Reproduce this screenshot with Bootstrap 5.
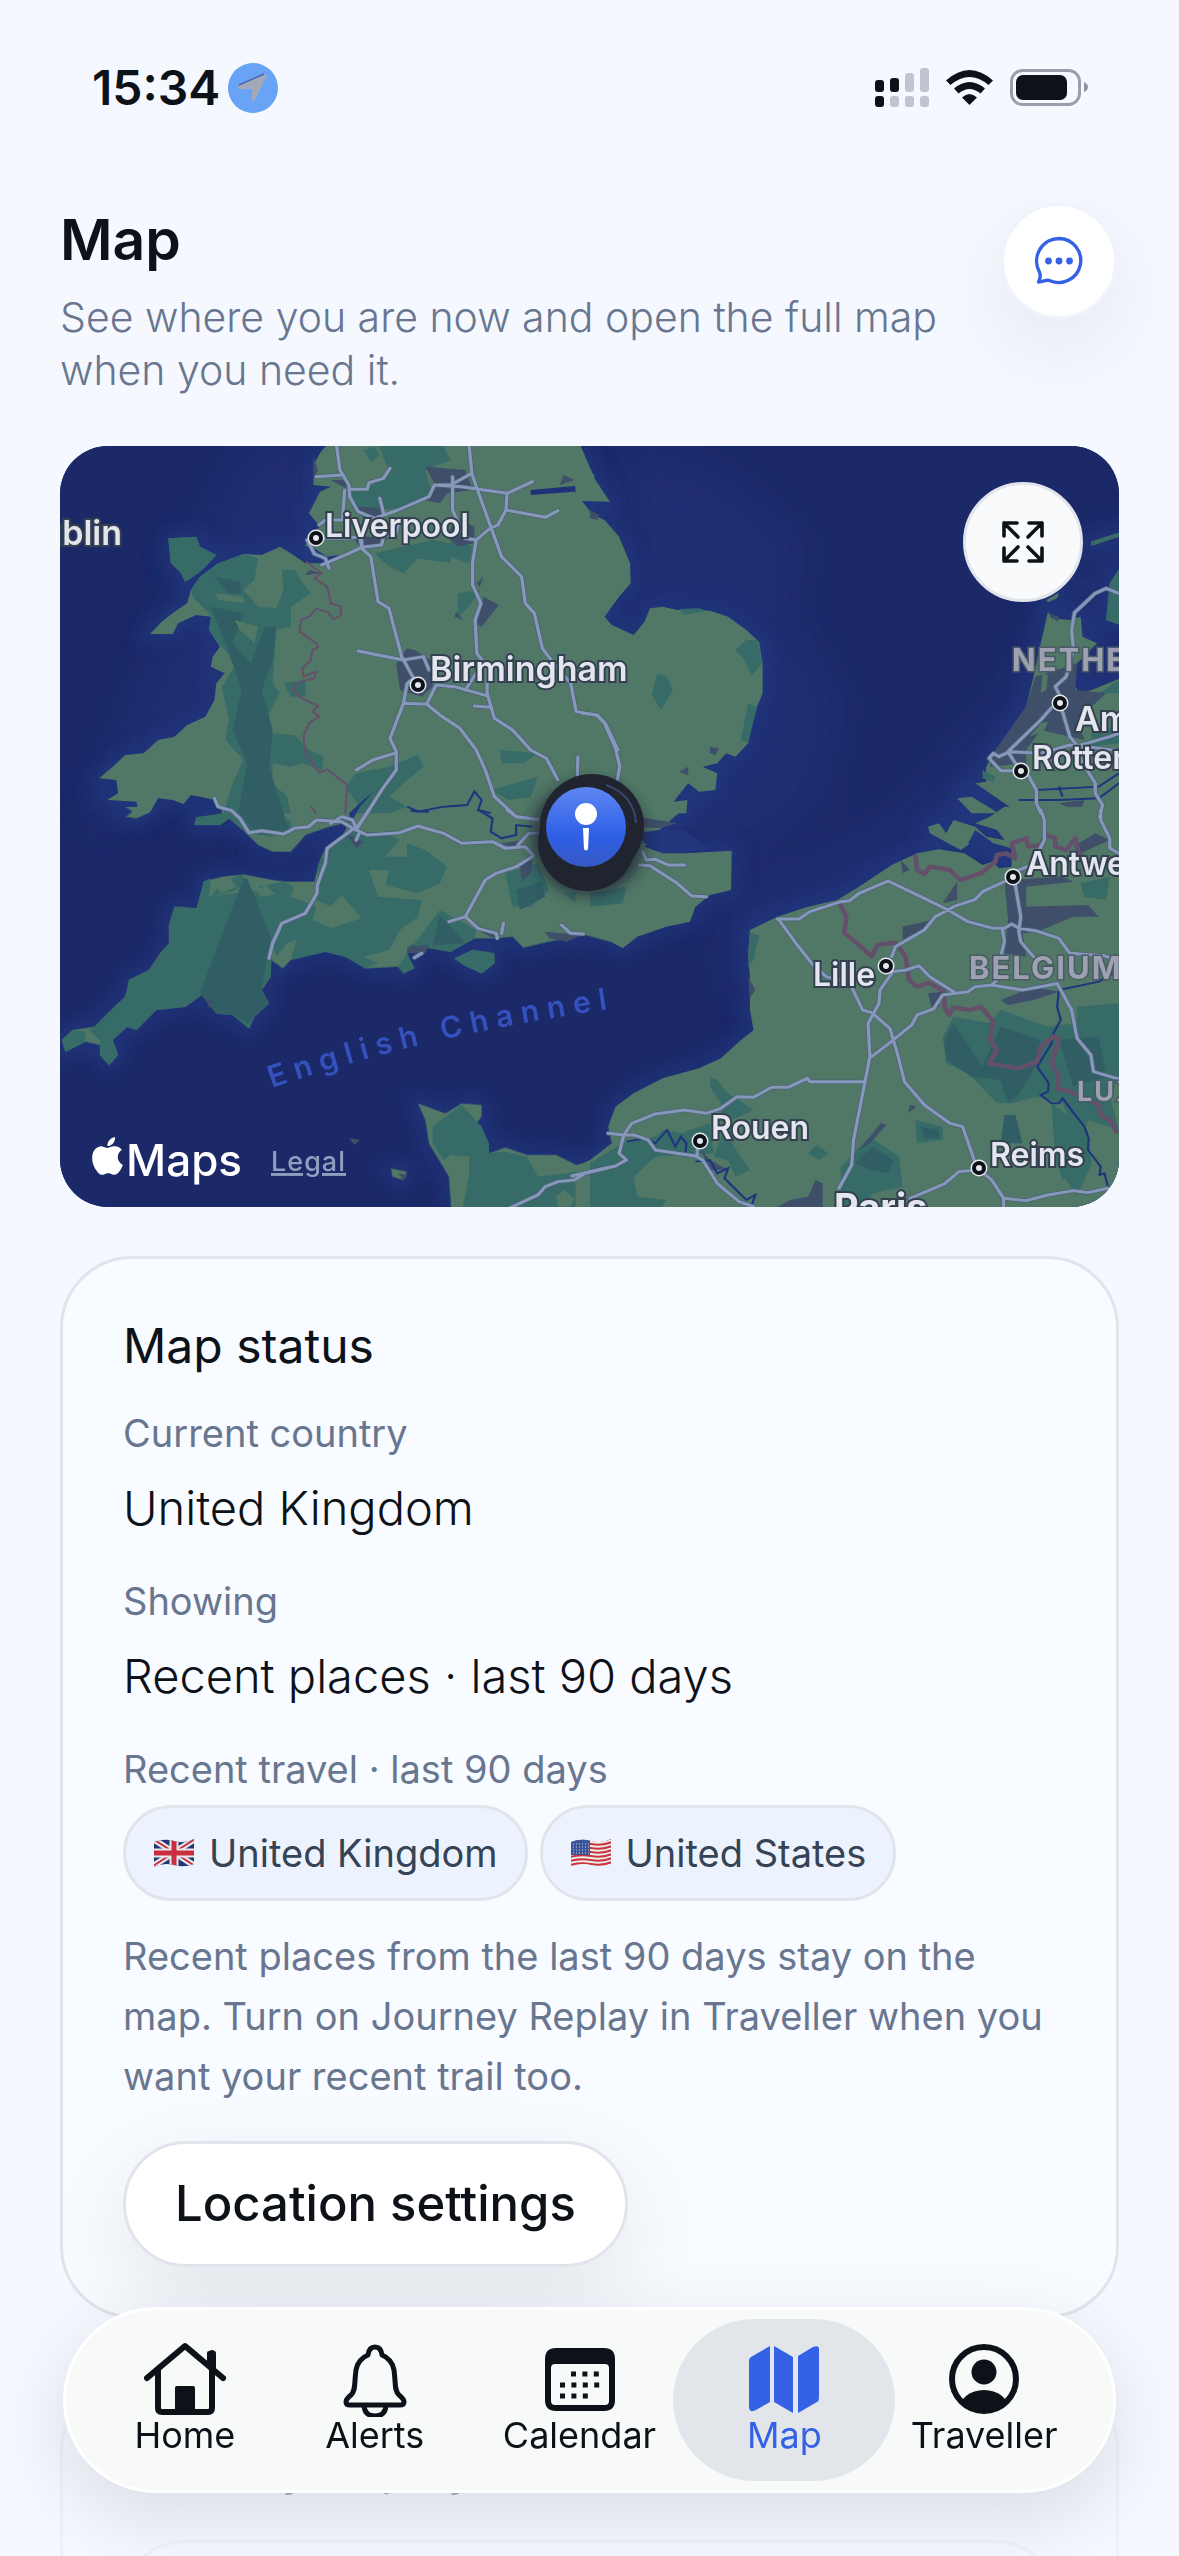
<!DOCTYPE html>
<html lang="en">
<head>
<meta charset="utf-8">
<meta name="viewport" content="width=device-width, initial-scale=1">
<title>Map</title>
<link rel="stylesheet" href="https://cdn.jsdelivr.net/npm/bootstrap@5.3.0/dist/css/bootstrap.min.css">
<script src="https://cdn.jsdelivr.net/npm/bootstrap@5.3.0/dist/js/bootstrap.bundle.min.js"></script>
<style>
:root{--ink:#0d1118;--muted-ink:#68768f;--line:#e1e5eb;--blue:#3461e6}
body{background:#f5f8fe;color:var(--ink);font-family:Inter,"Liberation Sans",sans-serif;font-size:36px;font-weight:400}
.screen{height:100vh;overflow:hidden;padding:0 60px}
.status-bar{height:203px;padding:63px 30px 0 32px}
.clock{font-size:48px;font-weight:600;line-height:50px}
.page-title{font-size:57px;font-weight:600;line-height:74px;margin:0 0 14px}
.page-sub{font-size:41px;font-weight:300;line-height:53px;color:var(--muted-ink);margin:0;max-width:900px}
.round-btn{width:116px;height:116px;padding:0;margin-right:2px;border-radius:50%;border:3px solid #eef3fc;background:#fff;box-shadow:0 30px 90px rgba(15,23,42,.08)}
.map-frame{margin-top:49px;border-radius:48px;overflow:hidden;background:#1b2867}
.map-frame>svg{display:block;width:100%;height:auto}
.map-frame .expand-btn{top:36px;right:36px;width:120px;height:120px;padding:0;border-radius:50%;border:3px solid #e1e5eb;background:#f8fafb}
.panel{border:3px solid var(--line);border-radius:72px;background:#f8fbff;padding:57px 60px 48px;margin-top:49px}
.panel-title{font-size:48px;font-weight:400;line-height:60px;margin:0 0 33px}
.panel dl{margin:0}
.panel dt{font-size:38px;font-weight:400;line-height:48px;color:var(--muted-ink)}
.panel dd{font-size:47px;font-weight:300;line-height:60px;margin:21px 0 39px}
.panel dd.chips{margin:12px 0 25px;display:flex;gap:12px}
.chip{display:flex;align-items:center;gap:14px;height:96px;padding:0 27px;border:3px solid var(--line);border-radius:48px;background:#ecf3fe;color:#364354;font-size:38px;font-weight:400}
.note{font-size:38px;line-height:60px;color:var(--muted-ink);margin:0 0 35px;max-width:925px}
.settings-btn{height:126px;padding:0 49px;border:3px solid var(--line);border-radius:63px;background:#fff;font-size:49px;line-height:60px;font-weight:500;color:var(--ink);box-shadow:0 30px 90px rgba(15,23,42,.09)}
.panel.faded{margin-top:60px;height:400px;opacity:.3}
.faded .inner-box{height:120px;margin-top:42px;border:3px solid var(--line);border-radius:60px}
.tab-bar{position:fixed;left:63px;right:63px;bottom:63px;height:186px;padding:0 24px;border:3px solid #fff;border-radius:93px;background:#f8faf9;box-shadow:0 24px 80px rgba(15,23,42,.12)}
.tab{position:relative;display:flex;flex-direction:column;align-items:center;padding-top:31px;color:var(--ink);text-decoration:none;font-size:36px;line-height:36px;flex:19 1 0;min-width:0}
.tab.wide{flex-grow:22}
.tab.last{flex-grow:21}
.tab span,.tab svg{position:relative}
.tab.active{color:var(--blue)}
.tab.active::before{content:"";position:absolute;inset:9px -16px;border-radius:81px;background:#e2e6eb}
.forest{fill:#366b68}.moor{fill:#305e64}.town{fill:#3f4f69}.land{fill:#517867}
.shore{stroke:#22377f;stroke-width:46;fill:none;filter:url(#soft);opacity:.8}
.shelf{fill:#203178;filter:url(#wide-soft);opacity:.7}
.water{fill:#22367e}.stream{fill:none;stroke:#20347e;stroke-width:6}
.casing{fill:none;stroke:#4a6273;stroke-width:13;stroke-linejoin:round;stroke-linecap:round}
.road{fill:none;stroke:#8797bc;stroke-width:9;stroke-linejoin:round;stroke-linecap:round}
.frontier{fill:none;stroke:#65506b;stroke-width:6;stroke-linejoin:round}
.frontier.bold{stroke-width:13}
.city{font:600 32px Inter,"Liberation Sans",sans-serif;fill:#e3e6ee;stroke:#34404f;stroke-width:4;paint-order:stroke}
.city .big{font-size:34px}
.nation{font:700 31px Inter,"Liberation Sans",sans-serif;fill:#9da1b1;stroke:#4a5a66;stroke-width:3;paint-order:stroke;letter-spacing:2px}
.sea-name{font:600 30px Inter,"Liberation Sans",sans-serif;fill:#3451bd;letter-spacing:8px}
</style>
</head>
<body>
<div class="screen">
  <div class="status-bar d-flex justify-content-between align-items-start">
    <div class="d-flex align-items-center">
      <span class="clock">15:34</span>
      <svg class="ms-2" width="50" height="50" viewBox="0 0 50 50"><circle cx="25" cy="25" r="25" fill="#68a3f5"/><path d="M11 22 36 11q3 0 2 3L27 37q-2 3-3 0V26H12q-4-1-1-4z" fill="#a2a9b8"/><path d="M11 22 36 11" stroke="#4a63b8" stroke-width="1.500"/></svg>
    </div>
    <svg width="216" height="50" viewBox="873 63 216 50" aria-label="Signal, Wi-Fi and battery">
      <g fill="#0d1118"><rect x="875" y="80" width="9" height="12" rx="3"/><rect x="890" y="78" width="9" height="14" rx="3"/><rect x="875" y="96" width="9" height="11" rx="3"/></g>
      <g fill="#bfc6d1"><rect x="905" y="73" width="9" height="19" rx="3"/><rect x="920" y="68" width="9" height="24" rx="3"/><rect x="890" y="96" width="9" height="11" rx="3"/><rect x="905" y="96" width="9" height="11" rx="3"/><rect x="920" y="96" width="9" height="11" rx="3"/></g>
      <g fill="#0d1118"><path d="M969.500 105l-7.500-7.500q7.500-7 15 0z"/><path d="M954 88.500q15.500-13 31 0l-4.500 5q-11-9-22 0z"/><path d="M946 80.500q23.500-21 47 0l-4.500 4.500q-19-16-38 0z"/></g>
      <rect x="1011.500" y="70.500" width="68" height="34" rx="11" fill="none" stroke="#989eac" stroke-width="3"/><rect x="1016" y="75" width="51" height="25" rx="7" fill="#0d1118"/><path d="M1084 82v10q4-2 4-5t-4-5z" fill="#8b93a1"/>
    </svg>
  </div>

  <header class="d-flex justify-content-between align-items-start">
    <div>
      <h1 class="page-title">Map</h1>
      <p class="page-sub">See where you are now and open the full map when you need it.</p>
    </div>
    <button class="round-btn btn flex-shrink-0" type="button" aria-label="Messages">
      <svg width="52" height="52" viewBox="0 0 52 52" fill="none" stroke="#3461e6" stroke-width="3.400" stroke-linejoin="round"><path d="M26 3.500a22 22 0 1 1-9 42.200c-4-1.700-6 1.300-11.500 1.300 2-4 2.500-7 .800-10.300A22.500 22.500 0 0 1 26 3.500z"/><g fill="#3461e6" stroke="none"><circle cx="15.500" cy="26" r="3.400"/><circle cx="26" cy="26" r="3.400"/><circle cx="36.500" cy="26" r="3.400"/></g></svg>
    </button>
  </header>

  <section class="map-frame position-relative" aria-label="Map of southern England and northern France">
    <svg viewBox="60 446 1059 761">
      <defs>
        <filter id="soft" x="-20%" y="-20%" width="140%" height="140%"><feGaussianBlur stdDeviation="9"/></filter>
        <filter id="wide-soft" x="-40%" y="-40%" width="180%" height="180%"><feGaussianBlur stdDeviation="22"/></filter>
        <filter id="halo" x="-50%" y="-50%" width="200%" height="200%"><feGaussianBlur stdDeviation="7"/></filter>
        <linearGradient id="pinfill" x1="0" y1="0" x2="0" y2="1"><stop offset="0" stop-color="#5f86f2"/><stop offset=".6" stop-color="#2f60e6"/><stop offset="1" stop-color="#3658c4"/></linearGradient>
        <g id="ring"><circle r="8.500" fill="#e6e8ee"/><circle r="7" fill="#0d1118"/><circle r="3" fill="#e6e8ee"/></g>
        <path id="nw" d="M800 30 770 70 755 100 752 165 800 170 770 185 740 250 770 290 735 325 730 350 750 375 775 395 730 400 690 370 660 350 610 375 560 372 530 385 490 400 440 440 415 480 405 520 370 545 335 575 303 612 365 612 380 580 430 555 470 560 465 600 495 650 475 680 470 710 508 730 485 760 480 810 455 860 405 885 370 920 325 930 285 970 235 975 200 1010 163 1045 210 1050 215 1090 185 1110 265 1115 268 1130 250 1148 302 1148 325 1105 365 1110 395 1122 415 1095 440 1100 480 1110 505 1140 500 1150 1525 1150 1525 262 1500 225 1470 185 1350 195 1350 180 1470 168 1525 208 1525 135 1520 130 1480 30z M353 325 430 320 440 350 485 375 455 410 435 430 400 455 385 425 360 400z"/>
        <path id="ne" d="M-40 60 0 125 55 215 -40 212z M-40 235 0 250 40 270 80 320 110 400 112 460 80 500 40 560 60 585 120 615 150 575 165 535 200 530 240 540 330 542 380 560 430 600 465 635 475 700 475 790 440 880 435 940 400 980 375 970 350 1000 310 1010 350 1030 345 1080 300 1085 270 1060 230 1115 268 1110 265 1150 -40 1150z"/>
        <path id="low" d="M1260 545 1270 565 1320 570 1350 560 1355 620 1395 640 1340 700 1330 760 1345 790 1380 780 1470 740 1500 1150 1180 1150 1060 1060 1090 1055 1090 1010 1110 970 1155 900 1200 830 1220 740 1240 640z M1010 1105 1050 1100 1110 1140 1120 1150 1050 1150z M1430 460 1460 410 1460 585 1420 570z M1255 510 1290 488 1285 505 1260 517z M1378 335 1455 308 1455 320 1380 347z"/>
        <path id="sw" d="M235 -10 305 -10 300 8 265 25 235 20 255 5z M430 22 425 45 495 45 520 25 560 62 600 105 640 125 690 125 715 95 730 75 790 52 850 35 830 85 780 125 765 165 755 215 680 215 640 210 560 193 500 200 450 215 445 250 465 260 430 295 370 290 355 345 355 400 330 430 300 480 245 510 235 560 205 590 150 650 90 660 60 690 70 725 125 695 165 705 165 735 190 765 215 735 200 690 240 650 265 660 320 600 400 590 445 555 485 610 530 615 575 655 590 620 630 580 610 540 635 500 635 450 668 475 690 450 785 425 840 440 895 475 985 470 1000 490 1030 475 1010 430 1020 405 1130 425 1195 385 1250 385 1300 380 1330 413 1400 395 1500 375 1568 395 1620 400 1620-10 500-10 500 15 480 18z M1140 445 1190 420 1250 430 1250 460 1215 490 1165 465z M1040 880 1115 910 1160 880 1215 885 1215 920 1200 940 1235 1000 1235 1030 1280 1012 1340 1035 1420 1035 1475 1065 1568 1040 1568 1260 1135 1260 1125 1100 1070 1000 1060 930z M965 1075 1010 1085 1000 1110 970 1100z"/>
        <path id="se" d="M-40-10 265-10 190 60 150 110 200 130 260 130 390 122 388 240 330 255 290 290 275 335 210 350 130 380 90 415 40 385 0 375-40 370z M-40 1070 0 1050 60 1000 50 950 70 890 120 850 200 805 300 775 360 745 410 695 450 660 440 600 440 500 435 430 440 360 515 320 600 290 680 270 740 230 830 165 900 130 960 118 1030 130 1080 165 1120 150 1160 120 1110 120 1060 90 1020 120 935 70 930 50 960 40 980 70 1000 30 1060 50 1090 80 1140 90 1120 60 1060 40 1100 20 1140-10 1500-10 1500 1260-40 1260z"/>
        <path id="nw-roads" d="M815 40 825 120 850 165 852 200 875 245 920 265 985 240 1070 200 1085 165 1160 170 1285 190 1355 155M760 140 830 135M850 178 900 178 905 158 945 145 963 115M838 180 832 270 785 270 768 285M885 325 885 355 910 380 930 515 960 535 995 680 1028 745 1010 760 1000 820 963 925 980 965 980 1020 940 1080 870 1200M735 330 755 372 785 385 795 415M775 405 850 370 885 352 940 345 945 320 980 310 985 285M780 325 840 325 880 320 885 350M1180 40 1188 130 1210 200 1240 290 1270 380 1325 440 1335 520 1360 550 1382 655 1420 710 1460 760 1475 845 1530 855 1555 880 1590 960M1135 140 1135 240 1170 325 1200 330 1238 295 1260 285 1282 240 1285 190M1282 240 1390 262 1425 242M1188 130 1130 165 1095 165M1200 330 1190 400 1190 465 1213 520 1197 570 1202 670 1230 710 1230 790 1250 865 1300 900 1350 960 1393 985 1425 1050M875 663 1000 690 1055 680 1070 720M1000 820 1065 823 1100 855 1155 895 1200 960 1225 1020 1250 1100 1310 1160 1370 1170M1065 820 1090 765 1140 770 1228 797M1170 780 1200 730M1195 828 1240 832M870 1020 915 990 975 970M1480 980 1478 1040M480 1105 490 1130 520 1140M935 205 945 250"/>
        <path id="ne-roads" d="M-20 850 20 855 40 880 70 955 82 1010 75 1050M1455 490 1420 475 1390 490 1333 548 1325 600 1330 660 1310 740 1280 770 1294 800M1270 833 1240 870 1150 965 1170 1000 1185 1010M1300 845 1320 920 1350 960 1350 990 1390 1060 1390 1090 1410 1125 1402 1160M1155 965 1240 970 1320 945 1455 962M1350 945 1430 920 1455 910M1155 965 1125 980 1110 970 1098 985 1130 1022 1165 1022M1205 1035 1228 1080 1228 1120 1240 1150"/>
        <path id="sw-roads" d="M525 0 550 25 575 68 610 62 670 72 700 55 740 50 760 30 830 35 860 55 900 75 990 68 1040 48 1110 70 1160 100 1245 95 1280 115 1335 110 1358 137 1310 170 1255 190 1225 210 1170 320 1125 335M1170 320 1205 355 1255 370 1258 385M1315 105 1345 70 1370 70M870 50 790 115 785 160 763 225 762 250 730 310 665 340 640 400 630 445M800 40 830 20 860 30 870 55 905 0M870 90 880 65M1285 0 1310 20 1370 28M1275 340 1270 370M1435 345 1460 370 1495 372M1030 443 1050 430M1290 1195 1370 1155 1390 1130 1425 1115 1470 1110 1500 1090 1568 1072"/>
        <path id="se-roads" d="M145 125 155 150 180 148 215 165 260 165M135 165 165 167 240 220 280 258 320 260M450 1190 410 1175 350 1120 310 1050 290 1038 180 1020 160 990 120 975 90 975 50 970M295 1010 295 1038M-50 1098 0 1085 70 1068 100 1050 80 1030 93 975 115 940 180 912 260 900 320 910 360 895 405 860 450 862 500 832 545 832 598 805 605 815 755 815M685 1135 720 1065 725 990 770 740 765 640 795 580 798 540 830 490M830 440 840 410 920 360 950 320 985 300 1000 290 1060 268 1080 245 1140 215M515 327 575 327 605 305 690 275 715 272 740 250 820 213 920 265 985 300 1040 335 1110 355 1140 355 1160 342 1180 355 1225 362 1290 385 1320 430 1415 437 1455 455M520 330 570 405 610 460 650 500 715 520 750 600 775 608 825 655 848 740 865 815 920 885 990 940 1025 950 1060 1060M775 740 835 690 885 645 900 615 945 597 970 555 1040 545 1060 530 1105 525 1190 540 1280 522M830 485 870 480 905 467 935 500 1000 545M1105 525 1130 500M1170 225 1185 320 1180 365 1185 395 1220 440M1135 360 1140 395 1130 440M1170 185 1215 165 1250 90 1250 30 1240 0M1405 0 1405 30 1430 85 1430 115 1455 130M1285 520 1325 600 1340 685 1378 735 1385 785 1455 807M880 1165 975 1122 1015 1085 1070 1080 1105 1110 1138 1165 1138 1200M1138 1165 1200 1172 1260 1155 1330 1142 1370 1148 1425 1135"/>
      </defs>
      <rect x="60" y="446" width="1059" height="761" fill="#1b2968"/>
      <g class="shelf"><path d="M250 440 330 440 330 560 230 600 240 700 150 800 80 830 140 700 190 560z"/><path d="M620 440 720 470 800 540 790 620 840 700 820 800 740 860 620 860z"/><path d="M1119 520 1119 700 960 860 740 1000 720 900 900 820 1020 680 1060 560z"/></g>
      <g class="shore">
        <use href="#nw" transform="translate(40 430) scale(.3635 .3333)"/>
        <use href="#ne" transform="translate(590 430) scale(.3635 .3333)"/>
        <use href="#low" transform="translate(590 430) scale(.3635 .3333)"/>
        <use href="#sw" transform="translate(40 810) scale(.3635 .3333)"/>
        <use href="#se" transform="translate(590 810) scale(.3635 .3333)"/>
      </g>
      <g transform="translate(40 810) scale(.3635 .3333)"><use href="#sw" class="land"/></g>
      <g transform="translate(40 430) scale(.3635 .3333)">
        <use href="#nw" class="land"/>
        <path class="forest" d="M925 30 1100 30 1130 90 1060 120 1080 200 1000 230 950 240 870 235 850 185 900 180 960 120z M890 60 920 50 935 75 910 95z M353 325 430 320 440 350 485 375 455 410 435 430 400 455 385 425 360 400z M490 400 560 372 600 385 590 450 560 480 600 530 650 535 670 480 665 420 700 420 730 470 745 490 690 530 690 590 650 600 640 760 660 790 620 870 640 910 700 915 740 960 780 980 775 1020 720 1000 690 1010 640 1000 640 1060 680 1100 690 1150 505 1150 530 1060 560 990 510 930 520 870 500 770 540 700 500 650 465 600 470 555 420 500 415 480 440 440z M670 760 730 750 730 800 690 800z M920 370 1080 330 1130 340 1130 400 1040 385 1000 430 960 410z M1150 490 1210 480 1180 530 1150 560z M870 1030 960 1010 1040 975 1055 1010 1000 1060 960 1100 1010 1130 960 1150 860 1150 880 1130 840 1070z M1265 960 1370 970 1330 1000 1270 1000z M1240 1080 1370 1040 1350 1100 1290 1110z M1130 310 1190 350 1180 400 1130 380z"/>
        <path class="moor" d="M480 440 550 455 555 490 520 490z M470 530 560 550 530 640 580 700 620 590 650 590 640 690 610 780 640 900 630 1010 670 1150 545 1150 570 1000 530 900 555 780 510 640z"/>
        <path class="land" d="M480 490 560 500 560 520 490 510z M535 570 600 590 590 640 550 600z M740 1040 800 1020 830 1060 820 1150 770 1150z"/>
        <path class="town" d="M1060 110 1170 120 1190 180 1120 190 1100 220 1060 210 1085 160z M870 230 950 235 940 265 890 265z M1145 260 1195 290 1195 340 1150 350 1120 320z M980 700 1010 655 1030 660 1075 690 1080 770 1050 800 990 780z M740 420 775 430 730 435z M800 150 850 150 840 175z M1440 135 1470 150 1430 165z M1220 500 1262 525 1215 590 1200 580z M1200 460 1220 440 1210 470z M1145 545 1165 570 1140 560z M752 80 765 120 752 150z M860 320 960 320 940 345 880 350z"/>
        <path class="water" d="M918 1085 890 1110 850 1150 855 1180 880 1130z M740 345 790 380 820 375 800 400 740 400 700 370z M1552 560 1568 530 1568 575z"/>
        <path class="stream" d="M1010 1130 1040 1145 1110 1130 1175 1125 1195 1085 1215 1110 1205 1140 1240 1150"/>
        <path class="frontier" d="M732 395 775 430 755 445 790 470 800 520 828 530 828 555 808 568 790 545 760 537 740 560 718 570 714 605 760 640 765 652 750 660 745 690 722 715 725 740 758 725 755 745 715 755 695 780 720 805 765 828 750 845 768 860 740 880 725 920 730 970 768 1028 790 1018 845 1065 840 1150M745 1130 760 1150"/>
      </g>
      <g transform="translate(590 430) scale(.3635 .3333)">
        <use href="#ne" class="land"/><use href="#low" class="land"/>
        <path class="forest" d="M400 660 430 630 460 630 475 700 445 735 425 690z M185 730 210 740 228 780 195 840 170 795z M435 820 460 830 435 940 415 930z M245 537 300 535 320 542 260 555z M1430 460 1460 410 1460 585 1420 570z M1400 790 1455 750 1455 790z M1380 900 1455 890 1455 940 1380 950z M1320 1150 1400 1140 1410 1150z M1080 1020 1115 1040 1110 1055 1080 1045z M1378 335 1455 308 1455 320 1380 347z"/>
        <path class="town" d="M1225 740 1340 700 1335 780 1420 790 1340 870 1360 930 1240 900 1200 960 1200 1000 1100 1010 1110 970 1200 830z M330 950 355 955 345 975 330 970z M245 1025 270 1010 270 1035z M1260 550 1290 560 1285 575z M0 240 25 255 20 270 0 265z M1290 1120 1360 1110 1350 1150z"/>
        <path class="land" d="M1240 880 1260 875 1250 900 1210 920z M1245 730 1260 735 1255 780 1240 790z"/>
        <path class="stream" d="M1180 1110 1290 1110 1400 1105 1455 1060M1230 1080 1400 1070 1455 1030M1290 1070 1300 1100"/>
      </g>
      <g transform="translate(40 810) scale(.3635 .3333)">
        <path class="forest" d="M425 45 495 45 520 25 570 70 640 80 690 55 690 30 500 10 430 22z M765 165 800 100 860 60 960 75 990 90 950 140 1010 140 1010 100 1060 120 1120 170 1100 220 1040 250 950 225 960 180 905 180 930 260 1050 270 1040 320 990 360 960 420 890 440 930 460 895 475 840 440 785 425 690 450 705 390 680 400 650 440 640 400 600 260 640 255 600 230 670 215 700 230 690 260 760 290 750 330 800 355 885 325 830 255 800 290 760 270z M560 193 500 215 470 260 540 240 560 225z M450 215 470 205 465 260 600 240 640 380 635 500 610 540 630 580 590 620 575 655 530 615 485 610 445 555 400 590 320 600 265 660 240 650 200 690 215 735 190 765 165 735 165 690 135 660 150 650 205 590 235 560 245 510 300 480 355 400 355 345 370 290 430 295z M125 665 125 695 70 725 60 690 90 660z M1010 430 1100 300 1200 360 1195 385 1130 425 1020 405z M1000 490 985 470 1010 430 1030 475z M1140 445 1190 420 1250 430 1250 460 1215 490 1165 465z M1280 190 1370 160 1400 240 1350 290 1300 290z M1440 250 1568 240 1568 290 1500 300z M1080 950 1115 920 1160 885 1215 950 1235 1000 1235 1030 1280 1025 1340 1040 1370 1100 1450 1090 1568 1060 1568 1260 1150 1260 1180 1100 1180 1040 1130 1035 1110 1050 1080 1000z"/>
        <path class="moor" d="M560 205 570 205 635 380 610 540 630 580 590 620 575 640 530 615 485 610 440 550z M1100 315 1170 400 1080 405z M1310 240 1380 215 1390 260 1320 300z M545 10 670 10 685 60 590 60z"/>
        <path class="land" d="M1420 1160 1440 1140 1470 1165 1460 1190 1425 1190z M480 230 520 200 540 230 500 250z M590 245 620 225 650 255z"/>
        <path class="town" d="M1010 410 1070 405 1060 430 1010 430z M1190 340 1260 370 1260 390 1220 370z M1320 160 1355 150 1350 190 1325 215z M1390 365 1490 375 1450 395 1400 385z M840 70 890 95 870 115z M455 560 475 570 465 595z M850 985 880 990 865 1005z M985 1090 1010 1095 1000 1112z M1270 100 1330 90 1300 115z"/>
        <path class="stream" d="M1205 0 1245 25 1240 65 1270 85 1310 75 1310 45 1355 50M1020 3 1070 5"/>
      </g>
      <g transform="translate(590 810) scale(.3635 .3333)">
        <use href="#se" class="land"/>
        <path class="forest" d="M0 250 100 230 90 280 0 290z M970 680 1000 620 1100 640 1130 600 1260 650 1340 640 1340 590 1455 580 1455 800 1430 860 1455 960 1370 930 1350 1010 1300 880 1230 860 1160 880 1120 880 1040 790 980 760z M330 800 350 810 380 850 410 870 450 900 390 930 390 1000 440 1080 400 1100 380 1050 340 1040 370 960 360 880 330 830z M0 1060 90 1000 180 980 200 960 250 970 330 940 340 1030 180 1040 120 1100 130 1160 210 1170 190 1200 0 1200z M895 930 970 950 970 990 900 1000z M690 1070 770 980 850 1040 860 1130 780 1150 740 1200 690 1180z M600 1030 625 1005 655 1030 630 1050z M440 370 465 375 450 450 435 470z M1280 1040 1350 1010 1340 1080 1300 1110z M1350 220 1430 200 1420 270 1360 260z M1270 880 1370 960 1380 1060 1340 1160 1280 1060z"/>
        <path class="moor" d="M975 690 1000 640 1080 770 1130 650 1240 690 1230 760 1180 850 1150 880 1130 810 1050 800 980 750z M1290 690 1400 680 1420 800 1330 830z M730 1060 775 1010 835 1050 820 1090 770 1080z M910 950 960 960 960 985 920 985z M1140 915 1170 915 1190 1000 1130 1000z"/>
        <path class="town" d="M1140 210 1300 200 1330 215 1200 230 1200 290 1370 285 1400 320 1330 320 1230 365 1190 370 1200 440 1140 430 1150 330z M970 280 1010 215 1010 270z M860 390 860 350 940 330 920 360z M1130 570 1220 530 1290 545 1220 570 1150 585z M940 590 930 550 970 545 960 590z M550 1170 600 1160 620 1110 640 1120 640 1200 500 1200z M855 150 880 180 860 190z M740 1020 800 940 815 945 770 1000z M875 910 880 885 898 890z M435 500 455 540 440 565z M300 1010 330 1050 380 1080 330 1080z M1330 110 1390 70 1430 90 1350 130z M130 20 240 40 190 55 130 50z"/>
        <path class="water" d="M1060 60 1110 100 1160 115 1160 170 1125 175 1080 120 1040 100z M120 70 190 60 260 60 330 120 200 130 150 100z"/>
        <path class="stream" d="M1455 480 1400 515 1290 540 1285 590 1295 630 1275 670 1270 700 1230 770 1262 820 1260 845 1240 855 1270 880 1290 880 1300 865 1360 950 1372 985 1370 1020 1405 1070 1402 1095 1415 1090 1425 1130M100 995 150 985 180 1000 212 960 235 1010 250 980 265 1000 262 1040M290 1055 330 1050 350 1090 380 1075 370 1105 430 1170 455 1155 445 1185"/>
        <path class="frontier bold" d="M895 135 900 180 920 192 935 170 990 180 1020 210 1075 190 1115 155 1120 135 1145 130 1170 145 1160 100 1200 85 1205 110 1240 105 1255 75 1280 85 1280 110 1310 120 1335 85 1345 130 1400 180M683 272 705 320 700 370 735 400 775 440 790 405 840 397 868 440 878 510 900 530 930 518 975 545 975 590 988 615 1000 592 1045 600 1075 590 1110 635 1100 690 1120 720 1098 760 1180 775 1230 755 1240 710 1275 680 1290 685 1270 760 1290 800 1285 835 1320 845 1400 885 1405 915 1435 935 1450 970"/>
      </g>
      <g class="casing">
        <use href="#nw-roads" transform="translate(40 430) scale(.3635 .3333)"/><use href="#ne-roads" transform="translate(590 430) scale(.3635 .3333)"/><use href="#sw-roads" transform="translate(40 810) scale(.3635 .3333)"/><use href="#se-roads" transform="translate(590 810) scale(.3635 .3333)"/>
      </g>
      <g class="road">
        <use href="#nw-roads" transform="translate(40 430) scale(.3635 .3333)"/><use href="#ne-roads" transform="translate(590 430) scale(.3635 .3333)"/><use href="#sw-roads" transform="translate(40 810) scale(.3635 .3333)"/><use href="#se-roads" transform="translate(590 810) scale(.3635 .3333)"/>
      </g>
      <use href="#ring" x="316" y="538"/><use href="#ring" x="418" y="685"/><use href="#ring" x="1060" y="703"/><use href="#ring" x="1021" y="771"/><use href="#ring" x="1013" y="877"/><use href="#ring" x="886" y="966"/><use href="#ring" x="700" y="1141"/><use href="#ring" x="979" y="1168"/>
      <g class="city">
        <text class="big" x="122" y="545" text-anchor="end">Dublin</text><text x="325" y="537">Liverpool</text><text class="big" x="430" y="681">Birmingham</text><text class="big" x="1075" y="731">Amsterdam</text><text x="1032" y="769">Rotterdam</text><text x="1026" y="875">Antwerp</text><text x="813" y="986">Lille</text><text x="711" y="1139">Rouen</text><text x="990" y="1166">Reims</text><text x="834" y="1221" style="font-size:38px;font-weight:700">Paris</text>
      </g>
      <g class="nation"><text x="1012" y="671">NETHERLANDS</text><text x="969" y="979">BELGIUM</text><text x="1077" y="1101" style="font-size:27px">LUXEMBOURG</text></g>
      <path id="channel" d="M272 1088Q440 1030 660 1002" fill="none"/>
      <text class="sea-name"><textPath href="#channel">English Channel</textPath></text>
      <g><circle cx="588" cy="838" r="58" fill="#1d2430" opacity=".7" filter="url(#halo)"/><circle cx="592" cy="826" r="52" fill="#20242f"/><circle cx="587" cy="842" r="49" fill="#20242f"/><path d="M606 785q28 10 30 38" fill="none" stroke="#39466a" stroke-width="2"/><circle cx="586" cy="827" r="40" fill="url(#pinfill)"/><circle cx="586" cy="814" r="11" fill="#fff"/><path d="M583 828h6l-1 21q-2 3-4 0z" fill="#fff"/></g>
      <svg x="91" y="1137" width="33" height="38" viewBox="1 0 14 16" fill="#fff"><path d="M11.182.008C11.148-.03 9.923.023 8.857 1.180c-1.066 1.156-.902 2.482-.878 2.516s1.520.087 2.475-1.258.762-2.391.728-2.430m3.314 11.733c-.048-.096-2.325-1.234-2.113-3.422s1.675-2.789 1.698-2.854-.597-.79-1.254-1.157a3.700 3.700 0 0 0-1.563-.434c-.108-.003-.483-.095-1.254.116-.508.139-1.653.589-1.968.607-.316.018-1.256-.522-2.267-.665-.647-.125-1.333.131-1.824.328-.49.196-1.422.754-2.074 2.237-.652 1.482-.311 3.830-.067 4.560s.625 1.924 1.273 2.796c.576.984 1.340 1.667 1.659 1.899s1.219.386 1.843.067c.502-.308 1.408-.485 1.766-.472.357.013 1.061.154 1.782.539.571.197 1.111.115 1.652-.105.541-.221 1.324-1.059 2.238-2.758q.52-1.185.473-1.282"/></svg>
      <text x="126" y="1176" font-size="44" font-weight="500" fill="#fff" font-family="Inter">Maps</text>
      <a href="#legal"><text x="271" y="1171" font-size="27" font-weight="500" letter-spacing="1" fill="#909dbf" font-family="Inter" text-decoration="underline">Legal</text></a>
    </svg>
    <button class="expand-btn btn position-absolute" type="button" aria-label="Open full map">
      <svg width="46" height="46" viewBox="0 0 46 46" fill="none" stroke="#0d1118" stroke-width="3.600" stroke-linecap="round" stroke-linejoin="round"><path d="M4 17V4h13M4 4l14 14M29 4h13v13M42 4 28 18M4 29v13h13M4 42l14-14M42 29v13H29M42 42 28 28"/></svg>
    </button>
  </section>

  <section class="panel">
    <h2 class="panel-title">Map status</h2>
    <dl>
      <dt>Current country</dt><dd>United Kingdom</dd>
      <dt>Showing</dt><dd>Recent places · last 90 days</dd>
      <dt>Recent travel · last 90 days</dt>
      <dd class="chips">
        <span class="chip"><svg width="42" height="30" viewBox="0 0 42 30"><clipPath id="wave"><path d="M1 4q10-4 20-1t20-2v25q-10 4-20 1t-20 2z"/></clipPath><g clip-path="url(#wave)"><path fill="#243673" d="M0 0h42v30H0z"/><path d="M0 1l42 27M42 1 0 28" stroke="#e8e8ee" stroke-width="6"/><path d="M0 1l42 27M42 1 0 28" stroke="#c53242" stroke-width="2"/><path d="M21 0v30M0 15h42" stroke="#e8e8ee" stroke-width="9"/><path d="M21 0v30M0 15h42" stroke="#c92f3e" stroke-width="5"/></g></svg>United Kingdom</span>
        <span class="chip"><svg width="42" height="30" viewBox="0 0 42 30"><g clip-path="url(#wave)"><path fill="#f1eef0" d="M0 0h42v30H0z"/><path d="M0 3q10-3 21-1t21-2M0 7q10-3 21-1t21-2M0 11q10-3 21-1t21-2M0 15q10-3 21-1t21-2M0 19q10-3 21-1t21-2M0 23q10-3 21-1t21-2M0 27q10-3 21-1t21-2" fill="none" stroke="#c9363f" stroke-width="2"/><path fill="#3b5397" d="M0 1h20v16H0z"/><g fill="none" stroke="#cdd5ea" stroke-dasharray="1 2"><path d="M3 6h16M3 9h16M3 12h16M3 15h16"/></g></g></svg>United States</span>
      </dd>
    </dl>
    <p class="note">Recent places from the last 90 days stay on the map. Turn on Journey Replay in Traveller when you want your recent trail too.</p>
    <button class="settings-btn btn" type="button">Location settings</button>
  </section>

  <section class="panel faded">
    <h2 class="panel-title">Journey Replay</h2>
    <div class="inner-box"></div>
  </section>
</div>

<nav class="tab-bar d-flex" aria-label="Main">
  <a class="tab" href="#home"><svg width="84" height="76" viewBox="0 0 84 76" fill="none" stroke="#0d1118" stroke-width="6" stroke-linecap="round" stroke-linejoin="round"><path d="M4 37 42 5l38 32"/><path d="M15 30v37q0 4 4 4h46q4 0 4-4V12v20"/><path d="M66 12h5v18l-5-5z" stroke-width="4" fill="#0d1118"/><path d="M34 71V47h16v24z" fill="#0d1118" stroke-width="4"/></svg><span>Home</span></a>
  <a class="tab" href="#alerts"><svg width="68" height="76" viewBox="0 0 68 76" fill="none" stroke="#0d1118" stroke-width="5" stroke-linejoin="round"><path d="M27 14Q17 18 15 29c-2 14 0 20-5 25q-5 4-5 7 0 3 4 3h50q4 0 4-3 0-3-5-7c-5-5-3-11-5-25q-2-11-12-15-1-8-7-8t-7 8z"/><path d="M23 65q1 10 11 10t11-10"/></svg><span>Alerts</span></a>
  <a class="tab wide" href="#calendar"><svg width="70" height="76" viewBox="0 0 70 76"><path fill="#0d1118" fill-rule="evenodd" d="M11 7h48q11 0 11 11v41q0 11-11 11H11Q0 70 0 59V18Q0 7 11 7zM10 23q-4 0-4 4v33q0 4 4 4h50q4 0 4-4V27q0-4-4-4z"/><path d="M26 33h29M15 44h40M15 55h29" stroke="#0d1118" stroke-width="5" stroke-dasharray="5 6.400"/></svg><span>Calendar</span></a>
  <a class="tab active" href="#map" aria-current="page"><svg width="70" height="76" viewBox="0 0 70 76" fill="#3461e6"><path d="M0 20q0-3 2-4L21 5v56L7 69q-6 3-7-2zM25 5l19 11v56L25 61zM49 15 64 6q6-2 6 2v49q0 3-2 4L49 72z"/></svg><span>Map</span></a>
  <a class="tab last" href="#traveller"><svg width="72" height="76" viewBox="0 0 72 76"><clipPath id="face"><circle cx="36" cy="38" r="33"/></clipPath><circle cx="36" cy="38" r="32" fill="none" stroke="#0d1118" stroke-width="6"/><circle cx="36" cy="31" r="12.500" fill="#0d1118"/><ellipse cx="36" cy="69" rx="25" ry="20" fill="#0d1118" clip-path="url(#face)"/></svg><span>Traveller</span></a>
</nav>
</body>
</html>
